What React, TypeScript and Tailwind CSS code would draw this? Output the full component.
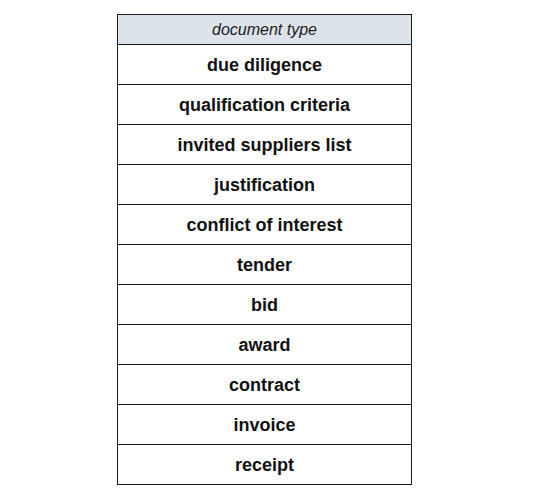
import React from "react";

const rows = [
  "due diligence",
  "qualification criteria",
  "invited suppliers list",
  "justification",
  "conflict of interest",
  "tender",
  "bid",
  "award",
  "contract",
  "invoice",
  "receipt",
];

export default function App() {
  return (
    <div className="w-[541px] h-[502px] bg-white pt-[14px] pl-[117px]" style={{ fontFamily: '"Liberation Sans", Arial, sans-serif' }}>
      <div className="w-[295px] border border-[#1a1a1a]">
        <div className="h-[29px] bg-[#dce3eb] flex items-center justify-center italic text-[16px] text-[#222] pt-[1px]">
          document type
        </div>
        {rows.map((r) => (
          <div key={r} className="h-[40px] border-t border-[#1a1a1a] flex items-center justify-center font-bold text-[18px] text-[#111] pt-[1px]">
            {r}
          </div>
        ))}
      </div>
    </div>
  );
}
